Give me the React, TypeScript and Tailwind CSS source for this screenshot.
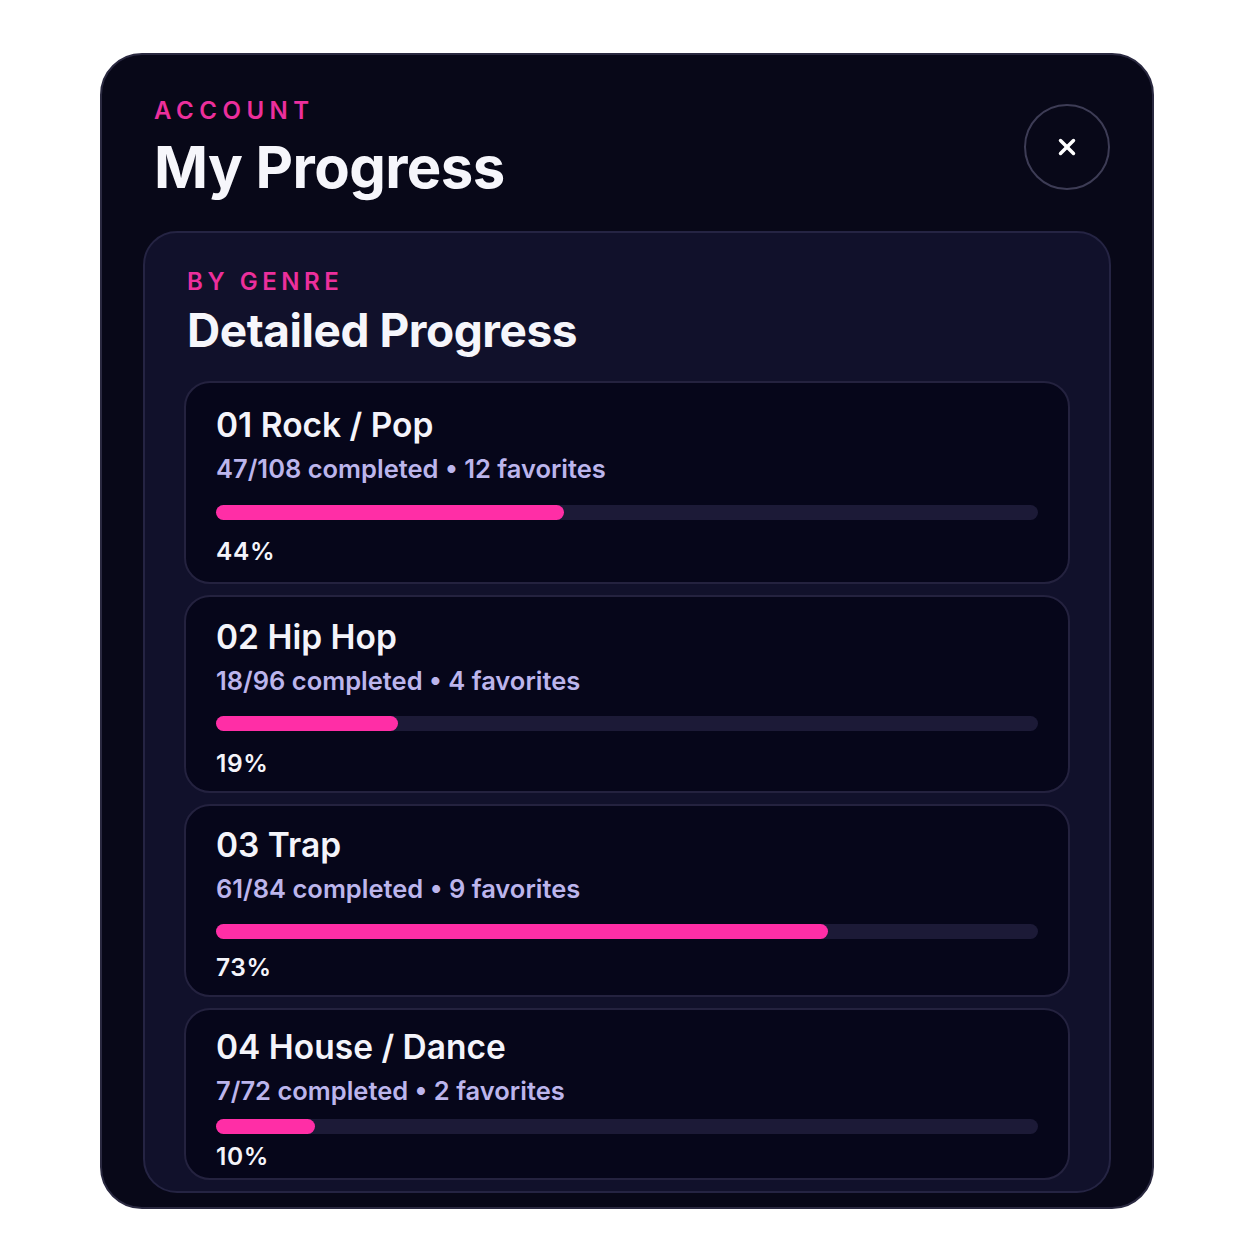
import { X } from "lucide-react";

const genres = [
  {
    title: "01 Rock / Pop",
    done: 47,
    total: 108,
    favs: 12,
    pct: 44,
    bar: 42.3,
    box: "pt-[22px] pb-[15px]",
    subGap: "mt-2",
    barGap: "mt-5",
    pctGap: "mt-[15px]",
  },
  {
    title: "02 Hip Hop",
    done: 18,
    total: 96,
    favs: 4,
    pct: 19,
    bar: 22.2,
    box: "pt-[20px] pb-[12px]",
    subGap: "mt-2",
    barGap: "mt-[19px]",
    pctGap: "mt-4",
  },
  {
    title: "03 Trap",
    done: 61,
    total: 84,
    favs: 9,
    pct: 73,
    bar: 74.5,
    box: "pt-[19px] pb-[12px]",
    subGap: "mt-2",
    barGap: "mt-[19px]",
    pctGap: "mt-3",
  },
  {
    title: "04 House / Dance",
    done: 7,
    total: 72,
    favs: 2,
    pct: 10,
    bar: 12,
    box: "pt-[17px] pb-[6px]",
    subGap: "mt-2",
    barGap: "mt-[12px]",
    pctGap: "mt-1.5",
  },
];

const GenreCard = ({ g }: any) => {
  return (
    <div
      className={`rounded-[26px] border-2 border-[#24223f] bg-[#06061a] px-[30px] ${g.box}`}
    >
      <p className="text-[33.5px] leading-[40px] font-semibold text-[#f4f4fa]">{g.title}</p>
      <p className={`${g.subGap} text-[25.5px] leading-[32px] font-semibold text-[#bcb5ec]`}>
        {g.done}/{g.total} completed • {g.favs} favorites
      </p>
      <div className={`${g.barGap} h-[15px] w-full rounded-full bg-[#1c1a37]`}>
        <div
          className="h-full rounded-full bg-[#ff2ea6]"
          style={{ width: `${g.bar}%` }}
        ></div>
      </div>
      <p className={`${g.pctGap} text-[24.5px] leading-[32px] font-semibold tracking-wide text-[#f4f4fa]`}>
        {g.pct}%
      </p>
    </div>
  );
};

export default function App() {
  return (
    <div className="min-h-screen bg-white pt-[53px] font-['Inter',sans-serif]">
      <div className="mx-auto flex h-[1156px] w-[1054px] flex-col overflow-hidden rounded-[42px] border-2 border-[#2a2940] bg-[#080818] px-[41px] pt-[41px] pb-[14px]">
        <div className="mb-8 flex items-start justify-between">
          <div className="pl-[11px]">
            <p className="text-[24px] leading-[30px] font-semibold tracking-[0.23em] text-[#ec2f9c]">
              ACCOUNT
            </p>
            <h1 className="mt-[9px] text-[58px] leading-[64px] font-bold tracking-[-0.01em] text-[#f6f6fb]">
              My Progress
            </h1>
          </div>
          <button className="mt-[8px] mr-[1px] flex h-[86px] w-[86px] items-center justify-center rounded-full border-2 border-[#3d3c55] text-white">
            <X size={26} strokeWidth={3.2} />
          </button>
        </div>

        <div className="flex-1 overflow-hidden rounded-[34px] border-2 border-[#252443] bg-[#11112b] px-[39px] pt-[35px]">
          <p className="pl-[3px] text-[24px] leading-[28px] font-semibold tracking-[0.19em] text-[#ec2f9c]">
            BY GENRE
          </p>
          <h2 className="mt-2 pl-[3px] text-[46px] leading-[52px] font-bold tracking-[-0.01em] text-[#f6f6fb]">
            Detailed Progress
          </h2>
          <div className="mt-[25px] flex flex-col gap-[11px]">
            {genres.map((g) => (
              <GenreCard key={g.title} g={g} />
            ))}
          </div>
        </div>
      </div>
    </div>
  );
}
